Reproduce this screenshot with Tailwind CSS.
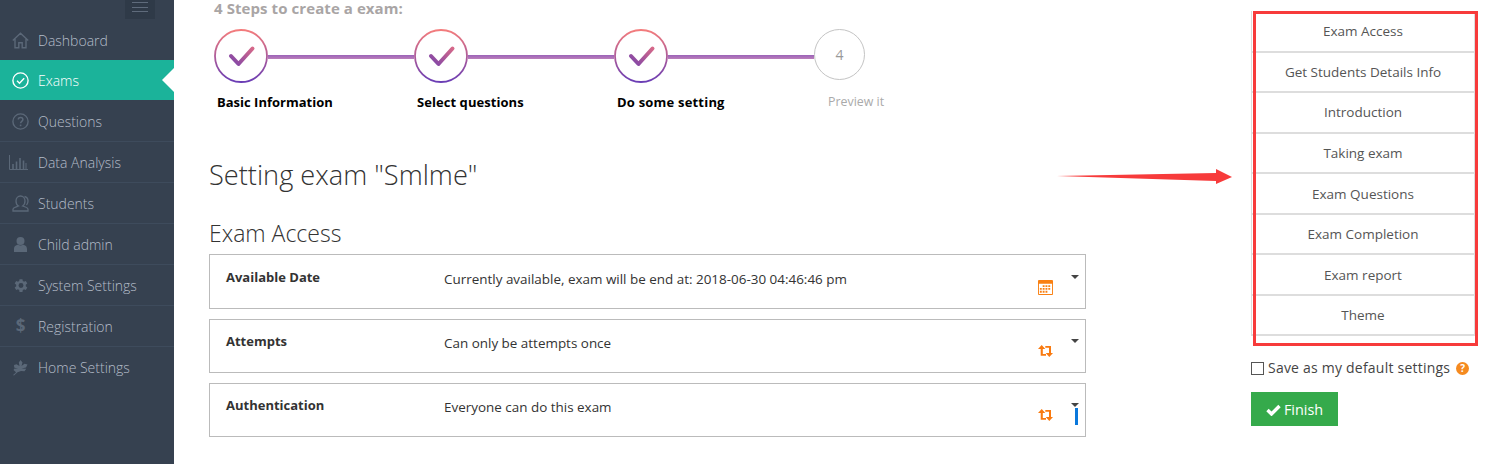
<!DOCTYPE html>
<html lang="en">
<head>
    <meta charset="UTF-8">
    <title>Setting exam</title>
    <script src="https://cdn.jsdelivr.net/npm/@tailwindcss/browser@4"></script>
</head>
<body class="bg-white font-['Open_Sans',sans-serif] overflow-hidden">
<svg width="0" height="0" class="absolute">
    <defs>
        <linearGradient id="ring" x1="0" y1="0" x2="0" y2="1"><stop offset="0" stop-color="#f47c7c"/><stop offset="1" stop-color="#6a3db5"/></linearGradient>
        <linearGradient id="tick" gradientUnits="userSpaceOnUse" x1="38" y1="17" x2="20" y2="37"><stop offset="0" stop-color="#d96a88"/><stop offset="1" stop-color="#7f45a8"/></linearGradient>
    </defs>
</svg>
<div class="flex h-[464px] relative">
    <!-- sidebar -->
    <aside class="w-[174px] shrink-0 bg-[#364150] relative text-[14px] font-light text-[#b4bcc8]">
        <div class="h-[20px] flex justify-end pr-[19px]">
            <div class="w-[30px] h-[19px] bg-[#2f3a48] flex flex-col items-center gap-[3.5px] pt-[2px]">
                <span class="w-[16px] h-px bg-[#5f6b7c]"></span><span class="w-[16px] h-px bg-[#5f6b7c]"></span><span class="w-[16px] h-px bg-[#5f6b7c]"></span>
            </div>
        </div>
        <ul>
            <li class="h-[40px] flex items-center pl-[12px] gap-[9px]">
                <svg class="w-[17px] h-[17px]" viewBox="0 0 17 17" fill="none" stroke="#5b6878" stroke-width="1.4"><path d="M0.8 8.5 8.5 1.2l7.7 7.3M3 7v8.8h3.8v-5h3.4v5H14V7"/></svg>
                <span>Dashboard</span>
            </li>
            <li class="h-[40px] flex items-center pl-[12px] gap-[9px] bg-[#1bb39a] text-white relative">
                <svg class="w-[17px] h-[17px]" viewBox="0 0 17 17" fill="none" stroke="#fff" stroke-width="1.4"><circle cx="8.5" cy="8.5" r="7.6"/><path d="M5 8.8l2.5 2.4L12.2 6.2"/></svg>
                <span>Exams</span>
                <span class="absolute right-0 top-[8px] border-y-[12px] border-y-transparent border-r-[12px] border-r-white"></span>
            </li>
            <li class="h-[42px] pt-px flex items-center pl-[12px] gap-[9px] border-b border-[#3e4b5c]">
                <svg class="w-[17px] h-[17px]" viewBox="0 0 17 17" fill="none" stroke="#5b6878" stroke-width="1.4"><circle cx="8.5" cy="8.5" r="7.6"/><path d="M6.3 6.6c0-3 4.6-2.8 4.6 0 0 1.8-2.3 1.8-2.3 3.6" stroke-width="1.5"/><path d="M8.6 11.6v1.6" stroke-width="1.6"/></svg>
                <span>Questions</span>
            </li>
            <li class="h-[41px] flex items-center pl-[9px] gap-[10px] border-b border-[#3e4b5c]">
                <svg class="w-[19px] h-[15px]" viewBox="0 0 19 15" fill="none" stroke="#5b6878"><path d="M.5 0v14.5H19" stroke-width="1"/><path d="M4 14V9M7.5 14V6.5M11 14V3M14.5 14V5.5" stroke-width="1.6"/><path d="M17 14V8" stroke-width="1"/></svg>
                <span>Data Analysis</span>
            </li>
            <li class="h-[41px] flex items-center pl-[12px] gap-[9px] border-b border-[#3e4b5c]">
                <svg class="w-[17px] h-[17px]" viewBox="0 0 17 17" fill="none" stroke="#5b6878" stroke-width="1.3"><path d="M6.5 11c-1.8-1-2.5-3-2.5-5 0-3 2-5 4.5-5S13 3 13 6c0 2-.8 4-2.400 5 2 .8 5.400 1.500 5.400 3.200V16H1v-1.800C1 12.500 4.500 11.800 6.500 11z"/><path d="M12.500 1.500c2 .5 3.500 2.300 3.500 4.500 0 1.500-.5 3-1.500 4"/></svg>
                <span>Students</span>
            </li>
            <li class="h-[41px] flex items-center pl-[12px] gap-[9px] border-b border-[#3e4b5c]">
                <svg class="w-[17px] h-[17px]" viewBox="0 0 17 17" fill="#5b6878"><circle cx="8.500" cy="5" r="4"/><path d="M2 16v-3c0-3 2.500-4 4-4.200 1.500 1 3.500 1 5 0 1.500.2 4 1.200 4 4.200v3z"/></svg>
                <span>Child admin</span>
            </li>
            <li class="h-[41px] flex items-center pl-[12px] gap-[9px] border-b border-[#3e4b5c]">
                <svg class="w-[17px] h-[17px]" viewBox="0 0 24 24" fill="#5b6878"><path d="M19.400 13a7.600 7.600 0 0 0 0-2l2.200-1.700-2.100-3.600-2.600 1a7.500 7.500 0 0 0-1.700-1L14.800 3h-4.200l-.4 2.700a7.500 7.500 0 0 0-1.700 1l-2.600-1-2.100 3.600L6 11a7.600 7.600 0 0 0 0 2l-2.200 1.700 2.100 3.600 2.600-1a7.500 7.500 0 0 0 1.700 1l.4 2.700h4.200l.4-2.700a7.500 7.500 0 0 0 1.700-1l2.600 1 2.100-3.600zM12.700 15.500a3.500 3.500 0 1 1 0-7 3.500 3.500 0 0 1 0 7z"/></svg>
                <span>System Settings</span>
            </li>
            <li class="h-[41px] flex items-center pl-[12px] gap-[9px] border-b border-[#3e4b5c]">
                <span class="w-[17px] text-center text-[17px] font-bold text-[#5b6878]">$</span>
                <span>Registration</span>
            </li>
            <li class="h-[41px] flex items-center pl-[12px] gap-[9px]">
                <svg class="w-[17px] h-[17px]" viewBox="0 0 17 17" fill="#5b6878"><path d="M8.500 1 10.500 3.500 9.500 7l3-2.200 3 .7-1.500 3-4.500 1 4.800.2-1.800 2.600-3.500-.3-3.500 1.300L2 16.500 1 16l3-2.500-.5-.8L1.500 11l1-1.500 3.500.5-3.800-1.500L2 6l2.500-.8L7.500 7 6.800 3.500z"/></svg>
                <span>Home Settings</span>
            </li>
        </ul>
    </aside>

    <!-- main column -->
    <main class="w-[912px] shrink-0 pl-[35px]">
        <h3 class="pl-[5px] text-[15px] leading-[17px] tracking-[0.08px] font-bold text-[#a9a5a5]">4 Steps to create a exam:</h3>
        <div class="flex pl-[5px] mt-[12px] h-[54px] items-start">
            <div class="w-[200px] flex items-start">
                <svg class="w-[54px] h-[54px] shrink-0" viewBox="0 0 54 54" fill="none"><circle cx="27" cy="27" r="26" stroke="url(#ring)" stroke-width="1.800"/><path d="M17 27l7.500 8L38.500 19.500" stroke="url(#tick)" stroke-width="4" stroke-linecap="round" stroke-linejoin="round"/></svg>
                <span class="flex-1 h-[4px] mt-[26px] bg-gradient-to-b from-[#9b62b8] to-[#bb7fba]"></span>
            </div>
            <div class="w-[200px] flex items-start">
                <svg class="w-[54px] h-[54px] shrink-0" viewBox="0 0 54 54" fill="none"><circle cx="27" cy="27" r="26" stroke="url(#ring)" stroke-width="1.800"/><path d="M17 27l7.500 8L38.500 19.500" stroke="url(#tick)" stroke-width="4" stroke-linecap="round" stroke-linejoin="round"/></svg>
                <span class="flex-1 h-[4px] mt-[26px] bg-gradient-to-b from-[#9b62b8] to-[#bb7fba]"></span>
            </div>
            <div class="w-[200px] flex items-start">
                <svg class="w-[54px] h-[54px] shrink-0" viewBox="0 0 54 54" fill="none"><circle cx="27" cy="27" r="26" stroke="url(#ring)" stroke-width="1.800"/><path d="M17 27l7.500 8L38.500 19.500" stroke="url(#tick)" stroke-width="4" stroke-linecap="round" stroke-linejoin="round"/></svg>
                <span class="flex-1 h-[4px] mt-[26px] bg-gradient-to-b from-[#9b62b8] to-[#bb7fba]"></span>
            </div>
            <div class="w-[51px] h-[51px] rounded-full border border-[#c4c4c4] flex items-center justify-center text-[14px] text-[#999]">4</div>
        </div>
        <div class="flex pl-[8px] mt-[10px] text-[13px] leading-[18px] font-bold text-black">
            <span class="w-[200px]">Basic Information</span>
            <span class="w-[200px] tracking-[0.06px]">Select questions</span>
            <span class="w-[211px] tracking-[0.2px]">Do some setting</span>
            <span class="font-normal text-[12.4px] text-[#aaa]">Preview it</span>
        </div>
        <h1 class="mt-[46px] text-[27.2px] leading-[36px] font-light text-[#333]">Setting exam "Smlme"</h1>
        <h2 class="mt-[25px] text-[23px] leading-[30px] font-light text-[#333]">Exam Access</h2>
        <div class="mt-[6px] w-[877px] flex flex-col gap-[10px]">
            <div class="relative h-[55px] border border-[#bbb] flex text-[13.45px] text-[#333]">
                <b class="w-[234px] pl-[16px] pt-[13px] text-[13px] leading-[18px]">Available Date</b>
                <span class="pt-[15px] leading-[18px]">Currently available, exam will be end at: 2018-06-30 04:46:46 pm</span>
                <svg class="absolute left-[828px] top-[25px] w-[15px] h-[15px]" viewBox="0 0 16 16" fill="#f98012"><path d="M1 0h14a1 1 0 0 1 1 1v14a1 1 0 0 1-1 1H1a1 1 0 0 1-1-1V1a1 1 0 0 1 1-1zM1 4v11h14V4z" fill-rule="evenodd"/><path d="M5 5.500h2v2H5zM8 5.500h2v2H8zM11 5.500h2v2h-2zM2 8.500h2v2H2zM5 8.500h2v2H5zM8 8.500h2v2H8zM11 8.500h2v2h-2zM2 11.500h2v2H2zM5 11.500h2v2H5zM8 11.500h2v2H8z"/></svg>
                <span class="absolute left-[861px] top-[20px] border-x-[4px] border-x-transparent border-t-[4px] border-t-[#444]"></span>
            </div>
            <div class="relative h-[54px] border border-[#bbb] flex text-[13.45px] text-[#333]">
                <b class="w-[234px] pl-[16px] pt-[12px] text-[13px] leading-[18px]">Attempts</b>
                <span class="pt-[14px] leading-[18px]">Can only be attempts once</span>
                <svg class="absolute left-[828px] top-[25px] w-[15px] h-[12px]" viewBox="0 0 15 12" fill="#f97a10"><path d="M3.700 0 7.300 4H4.800V9H8V10.700H2.700V4H0zM7.300 1H13V8H15L11.300 12 7.700 8H11V2.700H7.300z"/></svg>
                <span class="absolute left-[861px] top-[19px] border-x-[4px] border-x-transparent border-t-[4px] border-t-[#444]"></span>
            </div>
            <div class="relative h-[54px] border border-[#bbb] flex text-[13.45px] text-[#333]">
                <b class="w-[234px] pl-[16px] pt-[12px] text-[13px] leading-[18px]">Authentication</b>
                <span class="pt-[14px] leading-[18px]">Everyone can do this exam</span>
                <svg class="absolute left-[828px] top-[25px] w-[15px] h-[12px]" viewBox="0 0 15 12" fill="#f97a10"><path d="M3.700 0 7.300 4H4.800V9H8V10.700H2.700V4H0zM7.300 1H13V8H15L11.300 12 7.700 8H11V2.700H7.300z"/></svg>
                <span class="absolute left-[861px] top-[19px] border-x-[4px] border-x-transparent border-t-[4px] border-t-[#444]"></span>
                <span class="absolute left-[865px] top-[24px] w-[3px] h-[17px] bg-[#0a78dc]"></span>
            </div>
        </div>
    </main>

    <!-- right settings menu -->
    <aside class="ml-[165px] w-[236px] pt-[11px]">
        <div class="relative">
            <ul class="w-[224px] border-x border-[#ddd] text-[13.5px] text-[#555] text-center">
                <li class="h-[42px] flex items-center justify-center border-b-2 border-[#ddd]">Exam Access</li>
                <li class="h-[40px] flex items-center justify-center border-b-2 border-[#ddd]">Get Students Details Info</li>
                <li class="h-[41px] flex items-center justify-center border-b-2 border-[#ddd]">Introduction</li>
                <li class="h-[40px] flex items-center justify-center border-b-2 border-[#ddd]">Taking exam</li>
                <li class="h-[41px] pt-[2px] flex items-center justify-center border-b-2 border-[#ddd]">Exam Questions</li>
                <li class="h-[40px] flex items-center justify-center border-b-2 border-[#ddd]">Exam Completion</li>
                <li class="h-[41px] pt-[2px] flex items-center justify-center border-b-2 border-[#ddd]">Exam report</li>
                <li class="h-[40px] flex items-center justify-center border-b-2 border-[#ddd]">Theme</li>
            </ul>
            <div class="absolute left-[2px] top-0 w-[225px] h-[335px] border-[3px] border-[#f73b3b]"></div>
        </div>
        <div class="mt-[22px] flex items-center text-[14px] text-[#444] leading-[20px]">
            <span class="w-[13px] h-[13px] border border-[#555] mr-[4px]"></span>
            <span class="tracking-[0.22px]">Save as my default settings</span>
            <span class="ml-[6px] w-[13px] h-[13px] rounded-full bg-[#f58a1f] text-white text-[10px] leading-[13px] font-bold text-center">?</span>
        </div>
        <button class="mt-[14px] w-[87px] h-[34px] pt-[2px] bg-[#35aa4b] text-white text-[14.4px] flex items-center justify-center gap-[3px]">
            <svg class="w-[15px] h-[12px]" viewBox="0 0 15 12" fill="none" stroke="#fff" stroke-width="3.4"><path d="M1.500 6l4 4 8-8"/></svg>
            Finish
        </button>
    </aside>

    <!-- annotation arrow -->
    <svg class="absolute left-[1057px] top-[168px] w-[176px] h-[18px]" viewBox="0 0 176 18" fill="#f73b3b"><path d="M0 8 159 5V1L175 9 159 16V13z"/></svg>
</div>
</body>
</html>
